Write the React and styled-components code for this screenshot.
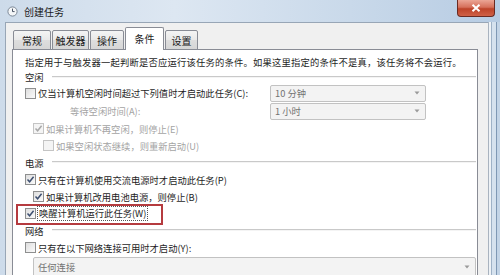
import React from 'react';
import styled, { createGlobalStyle } from 'styled-components';

const GlobalStyle = createGlobalStyle`
  html, body { margin: 0; padding: 0; }
  body {
    width: 500px;
    height: 275px;
    overflow: hidden;
    font-family: "Noto Sans CJK SC", "Noto Sans", sans-serif;
  }
`;

const Window = styled.div`
  width: 500px;
  height: 275px;
  display: flex;
  flex-direction: column;
  overflow: hidden;
  background: linear-gradient(to right, #cddbea, #dde7f2 35%, #c9d9ea 70%, #b7cce3);
`;

const TitleBar = styled.div`
  height: 22px;
  flex: none;
  display: flex;
  align-items: center;
  padding-left: 7px;
`;

const Title = styled.span`
  margin-left: 6px;
  font-size: 10px;
  color: #1b1b1b;
`;

const CloseBtn = styled.div`
  margin-left: auto;
  margin-right: 5px;
  align-self: flex-start;
  width: 38px;
  height: 17px;
  box-sizing: border-box;
  border: 1px solid #6a2a22;
  border-top: none;
  border-radius: 0 0 4px 4px;
  background: linear-gradient(#eba595, #d6705b 45%, #bd4329 55%, #cf6147);
  display: flex;
  align-items: center;
  justify-content: center;
`;

const Body = styled.div`
  flex: 1;
  display: flex;
  padding-left: 5px;
  min-height: 0;
`;

const Client = styled.div`
  flex: 1;
  display: flex;
  flex-direction: column;
  background: #f0f0f0;
  border-left: 1px solid #98a6b6;
  border-top: 1px solid #98a6b6;
  padding: 4px 10px 0 6px;
`;

const RightFrame = styled.div`
  width: 12px;
  flex: none;
  background: linear-gradient(
    to right,
    #a9b3bf 0 1px,
    #eef2f6 1px 3px,
    #9fb2c7 3px 4px,
    #d6e2ee 4px 8px,
    #7f98b4 8px 9px,
    #c3d4e6 9px
  );
`;

const TabStrip = styled.div`
  height: 23px;
  flex: none;
  display: flex;
  align-items: flex-end;
  gap: 1px;
  padding-left: 1px;
  margin-bottom: -1px;
  position: relative;
  z-index: 1;
`;

const Tab = styled.div`
  width: ${p => p.w}px;
  height: ${p => (p.active ? 23 : 20)}px;
  box-sizing: border-box;
  border: 1px solid #898c95;
  border-bottom: ${p => (p.active ? 'none' : '1px solid #898c95')};
  border-radius: 2px 2px 0 0;
  background: ${p =>
    p.active ? '#ffffff' : 'linear-gradient(#f4f4f4, #e9e9e9 50%, #dedede 50%, #d6d6d6)'};
  display: flex;
  align-items: center;
  justify-content: center;
  padding-bottom: ${p => (p.active ? 2 : 0)}px;
  font-size: 10px;
  color: #1b1b1b;
`;

const Panel = styled.div`
  flex: 1;
  background: #fff;
  border: 1px solid #898c95;
  padding: 4px 1px 0 12px;
  display: flex;
  flex-direction: column;
`;

const Row = styled.div`
  height: ${p => p.h || 17}px;
  flex: none;
  display: flex;
  align-items: center;
  padding-left: ${p => p.indent || 0}px;
  font-size: 9.3px;
  white-space: nowrap;
  color: ${p => (p.disabled ? '#a4a4a4' : '#1e1e1e')};
`;

const Desc = styled(Row)`
  letter-spacing: 0.2px;
`;

const Header = styled(Row)`
  &::after {
    content: '';
    flex: 1;
    margin-left: 8px;
    margin-top: -1px;
    border-top: 1px solid #c9c9c9;
    border-bottom: 1px solid #f4f4f4;
  }
`;

const IdleGrid = styled.div`
  display: grid;
  grid-template-columns: 245px 156px;
  grid-auto-rows: 18px;
  align-items: center;
`;

const Select = styled.div`
  height: ${p => p.h || 17}px;
  box-sizing: border-box;
  border: 1px solid #c2c2c2;
  border-radius: 2px;
  background: #f3f3f3;
  display: flex;
  align-items: center;
  padding: 0 5px 0 4px;
  margin-left: ${p => p.indent || 0}px;
  font-size: 9.3px;
  color: #727272;
  white-space: nowrap;
`;

const Arrow = styled.svg`
  margin-left: auto;
  flex: none;
`;

const Box = styled.span`
  width: 11px;
  height: 11px;
  box-sizing: border-box;
  flex: none;
  margin-right: 2px;
  border: 1px solid ${p => (p.disabled ? '#c4c4c4' : '#8e8f8f')};
  background: ${p =>
    p.disabled ? '#f4f4f4' : 'linear-gradient(135deg, #dedede, #fbfbfb)'};
  display: flex;
  align-items: center;
  justify-content: center;
`;

const Highlight = styled.span`
  position: relative;
  display: inline-flex;
  align-items: center;
  &::after {
    content: '';
    position: absolute;
    left: -9px;
    right: -16px;
    top: -3px;
    bottom: -5px;
    border: 2px solid #b53b3f;
  }
`;

const Focus = styled.span`
  outline: 1px dotted #555;
  outline-offset: 0;
  padding: 0 1px;
  line-height: 13px;
`;

const NetSelect = styled(Select)`
  margin-top: 1px;
`;

function Check({ checked, disabled }) {
  return (
    <Box disabled={disabled}>
      {checked && (
        <svg width="9" height="9" viewBox="0 0 9 9">
          <path
            d="M1.5 4.6 L3.6 6.8 L7.6 1.8"
            fill="none"
            stroke={disabled ? '#a8a8a8' : '#3d4f70'}
            strokeWidth="1.5"
          />
        </svg>
      )}
    </Box>
  );
}

function DropArrow() {
  return (
    <Arrow width="6" height="4" viewBox="0 0 6 4">
      <path d="M0.5 0.5 L3 3.5 L5.5 0.5 Z" fill="#9a9a9a" />
    </Arrow>
  );
}

const tabs = [
  { label: '常规', w: 38 },
  { label: '触发器', w: 37 },
  { label: '操作', w: 34 },
  { label: '条件', w: 39, active: true },
  { label: '设置', w: 33 },
];

export default function App() {
  return (
    <>
      <GlobalStyle />
      <Window>
        <TitleBar>
          <svg width="11" height="11" viewBox="0 0 11 11">
            <circle cx="5.5" cy="5.5" r="4.6" fill="#f4f6f8" stroke="#7b8796" strokeWidth="1" />
            <path d="M5.5 2.6 V5.6 H7.6" fill="none" stroke="#4a5566" strokeWidth="1" />
          </svg>
          <Title>创建任务</Title>
          <CloseBtn>
            <svg width="10" height="8" viewBox="0 0 10 8">
              <path d="M1.5 0.8 L8.5 7.2 M8.5 0.8 L1.5 7.2" stroke="#fff" strokeWidth="2" />
            </svg>
          </CloseBtn>
        </TitleBar>
        <Body>
          <Client>
            <TabStrip>
              {tabs.map(t => (
                <Tab key={t.label} w={t.w} active={t.active}>
                  {t.label}
                </Tab>
              ))}
            </TabStrip>
            <Panel>
              <Desc h={16}>
                指定用于与触发器一起判断是否应运行该任务的条件。如果这里指定的条件不是真，该任务将不会运行。
              </Desc>
              <Header h={14}>空闲</Header>
              <IdleGrid>
                <Row h={18}>
                  <Check />
                  仅当计算机空闲时间超过下列值时才启动此任务(C):
                </Row>
                <Select>
                  10 分钟
                  <DropArrow />
                </Select>
                <Row h={18} indent={45} disabled>
                  等待空闲时间(A):
                </Row>
                <Select>
                  1 小时
                  <DropArrow />
                </Select>
              </IdleGrid>
              <Row indent={8} disabled>
                <Check checked disabled />
                如果计算机不再空闲，则停止(E)
              </Row>
              <Row indent={18} disabled>
                <Check disabled />
                如果空闲状态继续，则重新启动(U)
              </Row>
              <Header>电源</Header>
              <Row>
                <Check checked />
                只有在计算机使用交流电源时才启动此任务(P)
              </Row>
              <Row indent={8}>
                <Check checked />
                如果计算机改用电池电源，则停止(B)
              </Row>
              <Row>
                <Highlight>
                  <Check checked />
                  <Focus>唤醒计算机运行此任务(W)</Focus>
                </Highlight>
              </Row>
              <Header>网络</Header>
              <Row>
                <Check />
                只有在以下网络连接可用时才启动(Y):
              </Row>
              <NetSelect h={20} indent={8}>
                任何连接
                <DropArrow />
              </NetSelect>
            </Panel>
          </Client>
          <RightFrame />
        </Body>
      </Window>
    </>
  );
}
